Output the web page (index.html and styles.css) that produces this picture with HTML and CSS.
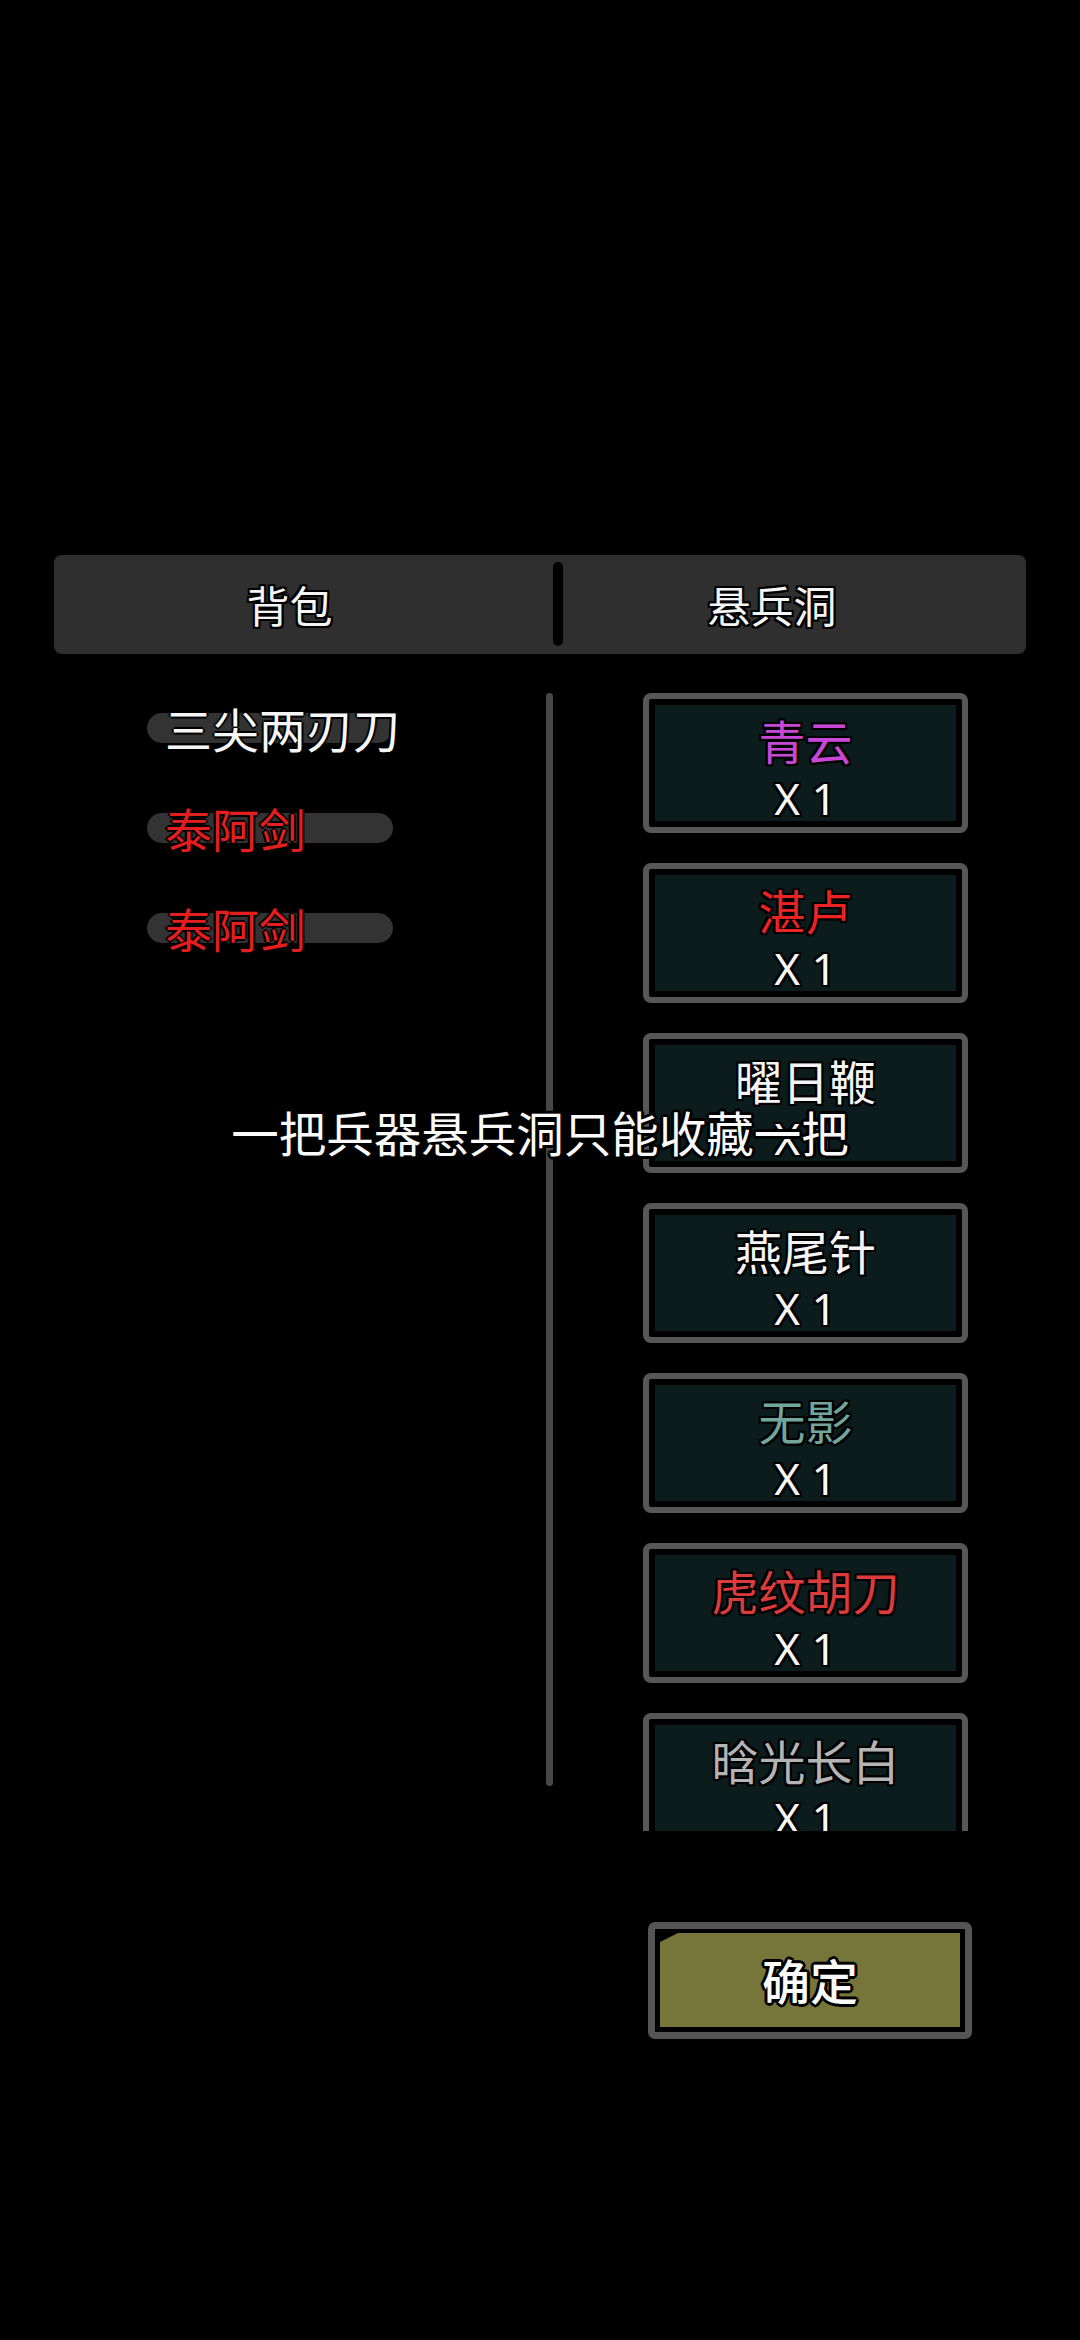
FILE: index.html
```html
<!DOCTYPE html>
<html lang="zh-CN">
<head>
<meta charset="utf-8">
<title>悬兵洞</title>
<link rel="stylesheet" href="styles.css">
</head>
<body>
<div class="screen">
  <div class="tabs">
    <div class="tab tab-left">背包</div>
    <div class="tab-divider"></div>
    <div class="tab tab-right">悬兵洞</div>
  </div>

  <div class="content">
    <div class="bag">
      <div class="bag-item">
        <div class="pill"></div>
        <div class="bag-name white">三尖两刃刀</div>
      </div>
      <div class="bag-item">
        <div class="pill"></div>
        <div class="bag-name red">泰阿剑</div>
      </div>
      <div class="bag-item">
        <div class="pill"></div>
        <div class="bag-name red">泰阿剑</div>
      </div>
    </div>
    <div class="scrollbar"></div>
    <div class="vault">
      <div class="card"><div class="card-inner"><div class="card-name c-purple">青云</div><div class="card-count">X 1</div></div></div>
      <div class="card"><div class="card-inner"><div class="card-name c-red">湛卢</div><div class="card-count">X 1</div></div></div>
      <div class="card"><div class="card-inner"><div class="card-name c-white">曜日鞭</div><div class="card-count">X 1</div></div></div>
      <div class="card"><div class="card-inner"><div class="card-name c-white">燕尾针</div><div class="card-count">X 1</div></div></div>
      <div class="card"><div class="card-inner"><div class="card-name c-teal">无影</div><div class="card-count">X 1</div></div></div>
      <div class="card"><div class="card-inner"><div class="card-name c-red2">虎纹胡刀</div><div class="card-count">X 1</div></div></div>
      <div class="card"><div class="card-inner"><div class="card-name c-grey">晗光长白</div><div class="card-count">X 1</div></div></div>
    </div>
  </div>

  <div class="footer">
    <div class="confirm">
      <div class="confirm-face">确定</div>
    </div>
  </div>

  <div class="toast">一把兵器悬兵洞只能收藏一把</div>
</div>
</body>
</html>
```

FILE: styles.css
```css
* { box-sizing: border-box; }

html, body {
  margin: 0;
  padding: 0;
  background: #000;
}

body {
  width: 1080px;
  height: 2340px;
  overflow: hidden;
  font-family: "Noto Sans CJK SC", "Noto Sans", sans-serif;
  color: #fff;
}

.screen {
  position: relative;
  width: 1080px;
  height: 2340px;
  padding-top: 555px;
}

/* ---------- tabs ---------- */
.tabs {
  margin: 0 54px;
  height: 99px;
  background: #2f2f2f;
  border-radius: 8px;
  display: grid;
  grid-template-columns: 499px 10px 1fr;
  align-items: center;
}

.tab {
  font-size: 43px;
  line-height: 99px;
  text-align: center;
  color: #f4f4f4;
  text-shadow:
    0 0 3px #000,
    2px 0 0 #000, -2px 0 0 #000, 0 2px 0 #000, 0 -2px 0 #000,
    2px 2px 0 #000, -2px -2px 0 #000, 2px -2px 0 #000, -2px 2px 0 #000;
}

.tab-left { padding-right: 28px; }
.tab-right { padding-right: 45px; }

.tab-divider {
  height: 84px;
  margin-top: -1px;
  background: #000;
  border-radius: 5px;
}

/* ---------- content ---------- */
.content {
  display: flex;
  margin-top: 39px;
  padding-left: 147px;
  align-items: flex-start;
}

.bag {
  width: 399px;
  display: flex;
  flex-direction: column;
  gap: 30px;
}

.bag-item {
  display: grid;
  height: 70px;
  align-items: center;
}

.pill {
  grid-area: 1 / 1;
  justify-self: start;
  width: 246px;
  height: 30px;
  border-radius: 15px;
  background: #333;
}

.bag-name {
  grid-area: 1 / 1;
  margin-left: 18px;
  font-size: 47px;
  line-height: 70px;
  white-space: nowrap;
  text-shadow:
    0 0 3px #000,
    2px 0 0 #000, -2px 0 0 #000, 0 2px 0 #000, 0 -2px 0 #000;
}

.bag-name.white { color: #f6f6f6; }
.bag-name.red { color: #e41e1e; }

.scrollbar {
  width: 7px;
  height: 1093px;
  border-radius: 4px;
  background: #474747;
}

.vault {
  margin-left: 90px;
  width: 325px;
  height: 1138px;
  overflow: hidden;
  display: flex;
  flex-direction: column;
  gap: 30px;
}

.card {
  flex: 0 0 140px;
  height: 140px;
  border: 6px solid #575757;
  border-radius: 8px;
  background: #000;
  padding: 6px;
}

.card-inner {
  height: 116px;
  background: #0c1c1c;
  padding-top: 5px;
  text-align: center;
  line-height: 59px;
  text-shadow:
    0 0 3px #000,
    2px 0 0 #000, -2px 0 0 #000, 0 2px 0 #000, 0 -2px 0 #000,
    2px 2px 0 #000, -2px -2px 0 #000, 2px -2px 0 #000, -2px 2px 0 #000;
}

.card-name {
  font-size: 47px;
  white-space: nowrap;
}

.card-count {
  font-size: 44px;
  color: #f6f6f6;
  font-family: "Noto Sans", "Noto Sans CJK SC", sans-serif;
}

.c-purple { color: #c947d6; }
.c-red { color: #ec2323; }
.c-white { color: #f4f4f4; }
.c-teal { color: #72a59c; }
.c-red2 { color: #dc3b3b; }
.c-grey { color: #b4b4b4; }

/* ---------- footer ---------- */
.footer {
  display: flex;
  padding-left: 648px;
  margin-top: 91px;
}

.confirm {
  width: 324px;
  height: 117px;
  border: 7px solid #555;
  border-radius: 7px;
  background: #000;
  padding: 4px 5px 5px 5px;
}

.confirm-face {
  height: 100%;
  background: #76763a;
  clip-path: polygon(0 9px, 18px 0, 100% 0, 100% 100%, 0 100%);
  display: flex;
  align-items: center;
  justify-content: center;
  font-size: 48px;
  font-weight: 500;
  color: #fafafa;
  padding-bottom: 2px;
  text-shadow:
    0 0 3px #000,
    3px 0 0 #000, -3px 0 0 #000, 0 3px 0 #000, 0 -3px 0 #000,
    2px 2px 0 #000, -2px -2px 0 #000, 2px -2px 0 #000, -2px 2px 0 #000;
}

/* ---------- toast overlay ---------- */
.toast {
  position: absolute;
  left: 0;
  right: 0;
  top: 1102px;
  text-align: center;
  font-size: 47.5px;
  line-height: 60px;
  color: #fafafa;
  white-space: nowrap;
  text-shadow:
    0 0 3px #000,
    3px 0 0 #000, -3px 0 0 #000, 0 3px 0 #000, 0 -3px 0 #000,
    2px 2px 0 #000, -2px -2px 0 #000, 2px -2px 0 #000, -2px 2px 0 #000;
}
```
